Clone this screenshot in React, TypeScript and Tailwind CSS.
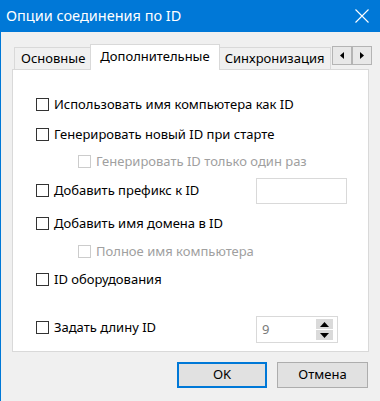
import { ReactNode } from "react";

function Box({ disabled }: { disabled?: boolean }) {
  return (
    <span
      className={`block w-[13px] h-[13px] shrink-0 bg-white border ${
        disabled ? "border-[#cccccc]" : "border-[#333333]"
      }`}
    />
  );
}

function Check({
  label,
  disabled,
  indent,
  className = "",
  children,
}: {
  label: string;
  disabled?: boolean;
  indent?: boolean;
  className?: string;
  children?: ReactNode;
}) {
  return (
    <div className={`flex items-center h-[13px] ${indent ? "pl-[65px]" : "pl-[23px]"} ${className}`}>
      <div className={`flex items-center gap-[5px] ${children ? "w-[220px]" : ""}`}>
        <Box disabled={disabled} />
        <span className={`whitespace-nowrap ${disabled ? "text-[#a0a0a0]" : "text-black"}`}>{label}</span>
      </div>
      {children}
    </div>
  );
}

function Tab({ label, active }: { label: string; active?: boolean }) {
  if (active) {
    return (
      <div className="relative z-10 -mx-[2px] -mb-px h-[26px] px-[9px] pt-[2px] bg-white border border-b-0 border-[#d9d9d9] whitespace-nowrap">
        {label}
      </div>
    );
  }
  return (
    <div className="h-[22px] px-[6px] pt-[1px] bg-[#f0f0f0] border border-b-0 border-[#d9d9d9] whitespace-nowrap">
      {label}
    </div>
  );
}

function Arrow({ dir }: { dir: "l" | "r" }) {
  return (
    <div className="w-[20px] h-[19px] flex items-center justify-center bg-[#e8e8e8] border border-[#b4b4b4]">
      <svg width="4" height="7" viewBox="0 0 4 7">
        <path d={dir === "l" ? "M4 0 L0 3.5 L4 7 Z" : "M0 0 L4 3.5 L0 7 Z"} fill="#000" />
      </svg>
    </div>
  );
}

export default function App() {
  return (
    <div
      className="w-[380px] h-[401px] bg-[#f0f0f0] border-l border-[#0078d7] flex flex-col text-[13px] overflow-hidden"
      style={{ fontFamily: '"Noto Sans", "Open Sans", sans-serif' }}
    >
      <div className="h-[32px] bg-[#0078d7] flex items-center justify-between pl-[5px] pr-[11px] text-white">
        <span className="text-[14.5px]">Опции соединения по ID</span>
        <svg width="14" height="14" viewBox="0 0 14 14">
          <path d="M0.5 0.5 L13.5 13.5 M13.5 0.5 L0.5 13.5" stroke="#fff" strokeWidth="1.1" />
        </svg>
      </div>

      <div className="flex flex-col pl-[11px] pr-[11px] pt-[11px]">
        <div className="flex items-end h-[26px] pl-[2px]">
          <Tab label="Основные" />
          <Tab label="Дополнительные" active />
          <Tab label="Синхронизация" />
          <div className="flex self-start mt-[3px] ml-auto -mr-[3px]">
            <Arrow dir="l" />
            <Arrow dir="r" />
          </div>
        </div>

        <div className="h-[283px] bg-white border border-[#d9d9d9] flex flex-col">
          <Check label="Использовать имя компьютера как ID" className="mt-[28px]" />
          <Check label="Генерировать новый ID при старте" className="mt-[17px]" />
          <Check label="Генерировать ID только один раз" disabled indent className="mt-[14px]" />
          <Check label="Добавить префикс к ID" className="mt-[16px]">
            <div className="w-[91px] h-[26px] shrink-0 bg-white border border-[#d9d9d9]" />
          </Check>
          <Check label="Добавить имя домена в ID" className="mt-[20px]" />
          <Check label="Полное имя компьютера" disabled indent className="mt-[15px]" />
          <Check label="ID оборудования" className="mt-[15px]" />
          <Check label="Задать длину ID" className="mt-[35px]">
            <div className="w-[82px] h-[27px] mt-[4px] shrink-0 bg-white border border-[#d9d9d9] flex items-center justify-between pl-[5px] pr-[4px]">
              <span className="text-[#7a7a7a]">9</span>
              <div className="flex flex-col gap-px">
                <div className="w-[17px] h-[10px] bg-[#dadada] flex items-center justify-center">
                  <svg width="9" height="5" viewBox="0 0 9 5">
                    <path d="M0 5 L4.5 0 L9 5 Z" fill="#000" />
                  </svg>
                </div>
                <div className="w-[17px] h-[10px] bg-[#dadada] flex items-center justify-center">
                  <svg width="9" height="5" viewBox="0 0 9 5">
                    <path d="M0 0 L4.5 5 L9 0 Z" fill="#000" />
                  </svg>
                </div>
              </div>
            </div>
          </Check>
        </div>

        <div className="flex justify-end gap-[10px] mt-[10px] pr-px">
          <button className="w-[90px] h-[26px] bg-[#e1e1e1] border-2 border-[#0078d7] text-black">OK</button>
          <button className="w-[91px] h-[26px] bg-[#e1e1e1] border border-[#adadad] text-black">Отмена</button>
        </div>
      </div>
    </div>
  );
}
